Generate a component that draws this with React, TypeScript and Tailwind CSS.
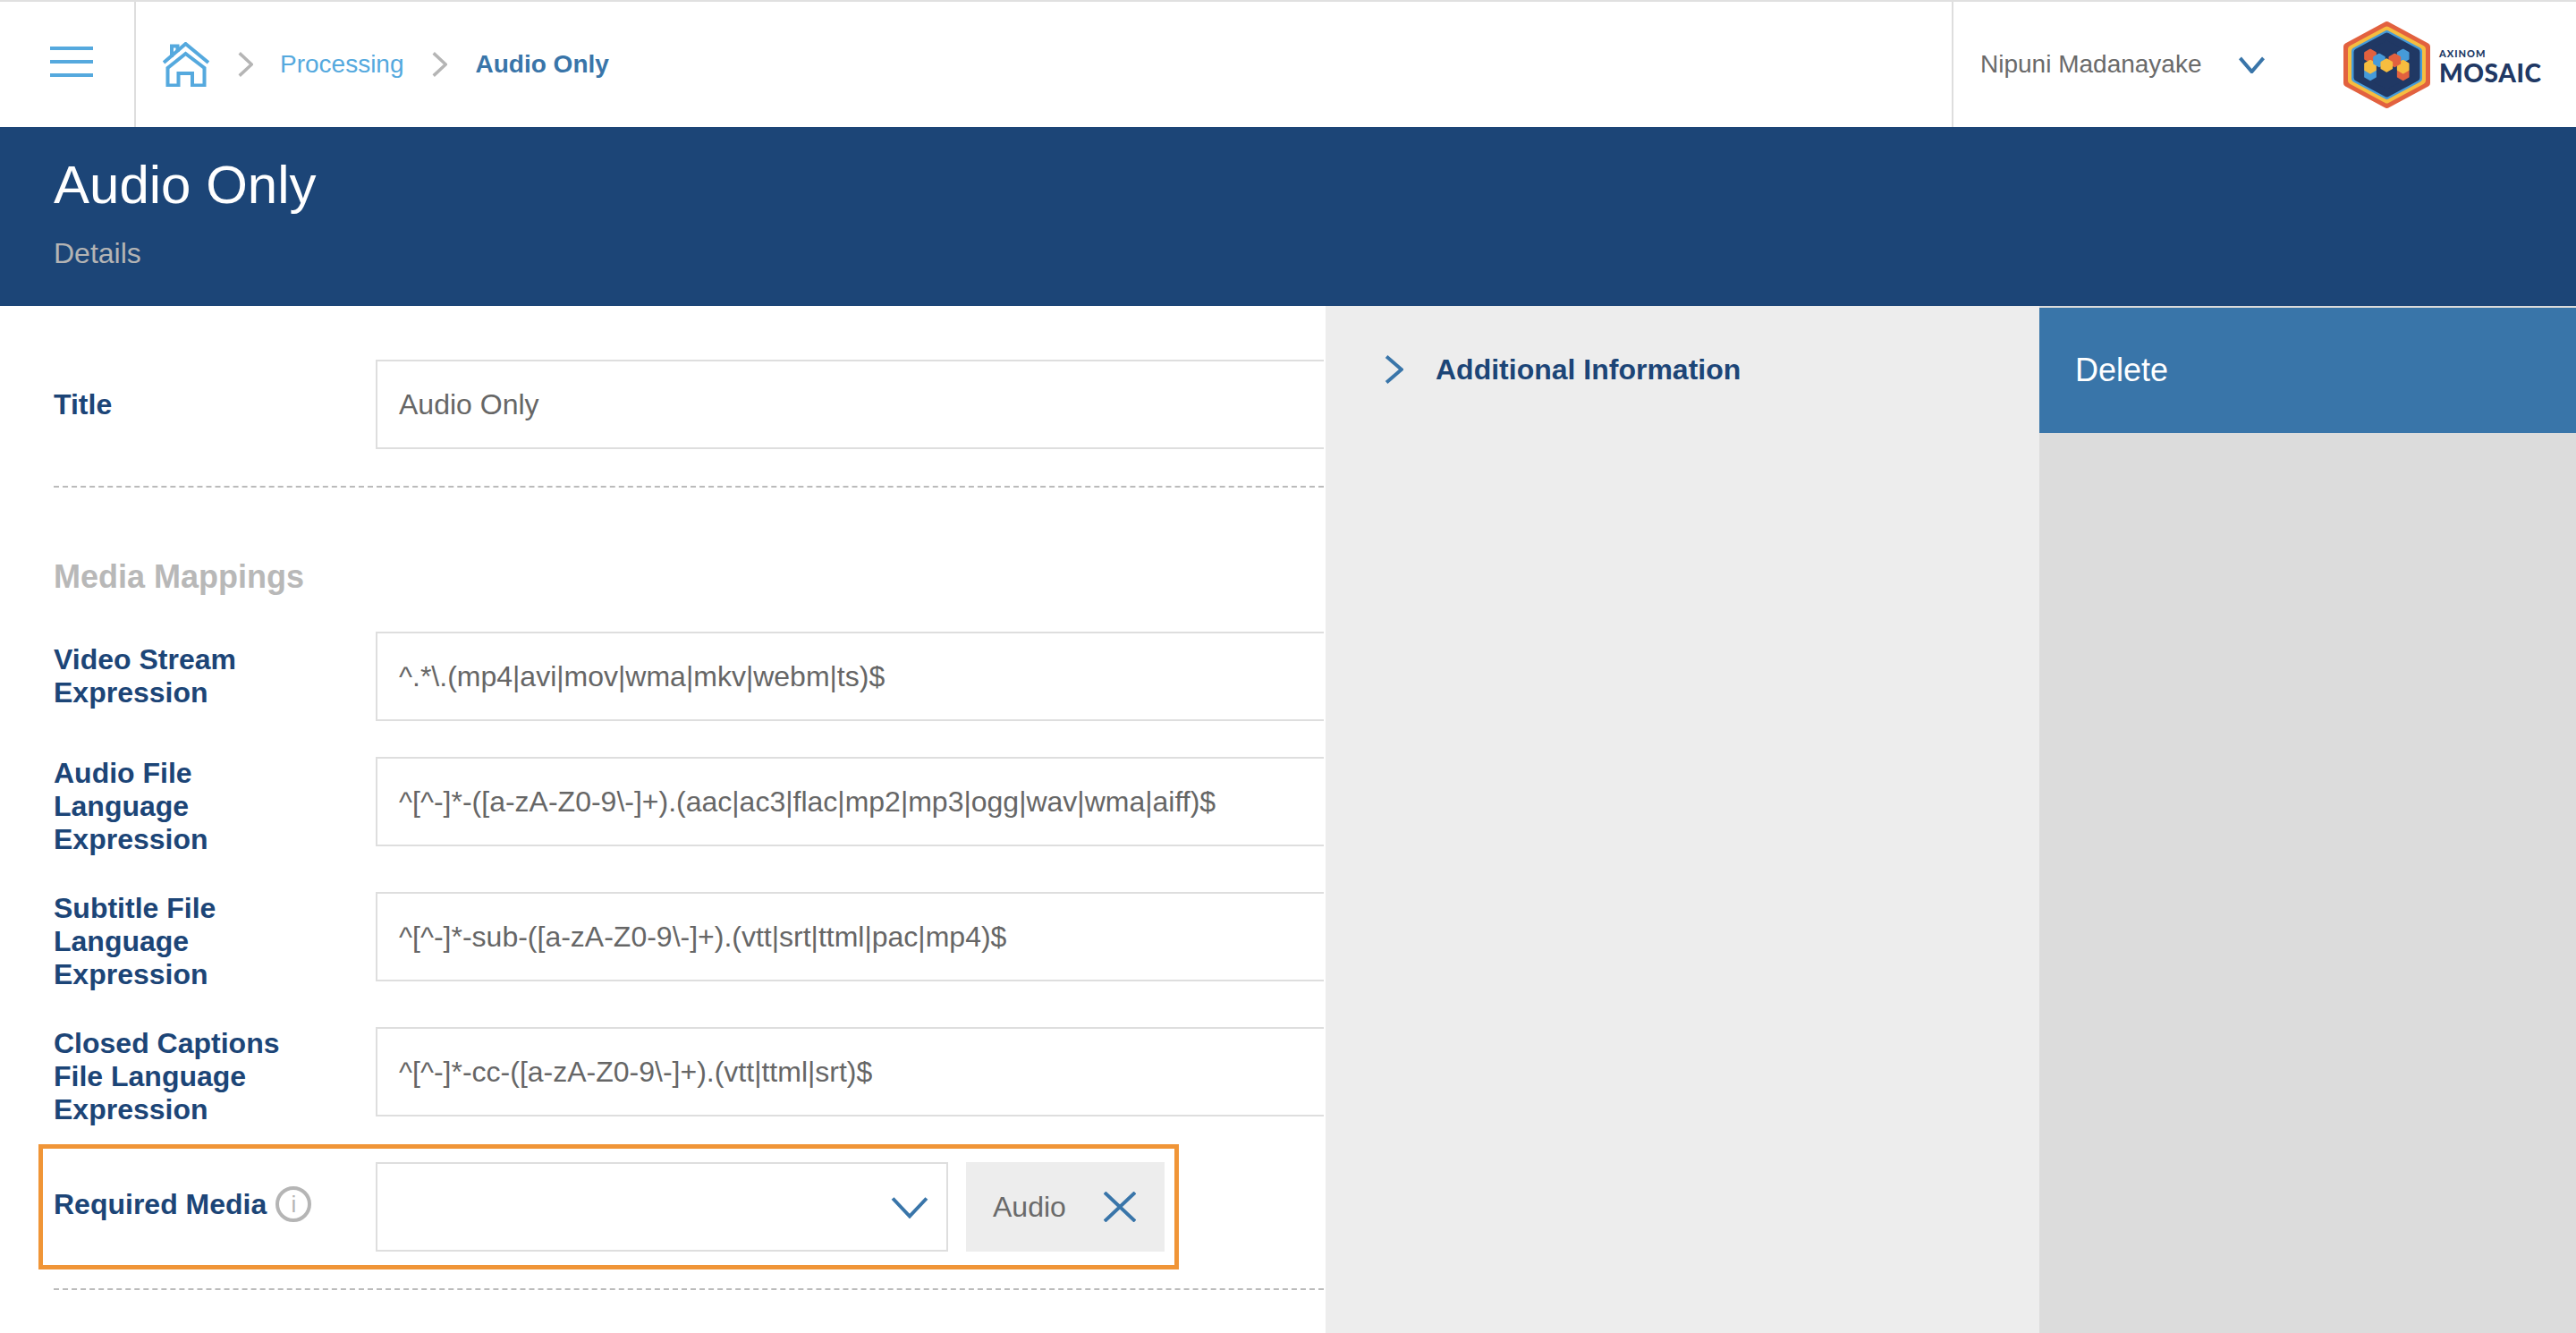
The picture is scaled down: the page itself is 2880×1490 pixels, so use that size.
const BLUE = '#3975a9';

function Chevron({ dir, color, className, width = 3.5 }: { dir: 'right' | 'down'; color: string; className: string; width?: number }) {
  return (
    <svg className={className} viewBox="0 0 20 20" preserveAspectRatio="none" fill="none">
      <path
        d={dir === 'right' ? 'M2 1 L18 10 L2 19' : 'M1 2 L10 18 L19 2'}
        stroke={color}
        strokeWidth={width}
        vectorEffect="non-scaling-stroke"
      />
    </svg>
  );
}

function HomeIcon() {
  return (
    <svg className="w-[52px] h-[50px]" viewBox="12 12 52 50" fill="none" stroke="#55a9de" strokeWidth="4">
      <path d="M13 35 L37.5 14 L63 35" />
      <path d="M22 29 V16.5 H28.5 V23" />
      <path d="M17.5 60.5 V41 L37.5 25 L58.5 41 V60.5 H45 V47 H29.5 V60.5 Z" />
    </svg>
  );
}

function hexPoints(cx: number, cy: number, r: number) {
  const dx = r * 0.86;
  return `${cx},${cy - r} ${cx + dx},${cy - r / 2} ${cx + dx},${cy + r / 2} ${cx},${cy + r} ${cx - dx},${cy + r / 2} ${cx - dx},${cy - r / 2}`;
}

function MiniHex({ x, y, fill }: { x: number; y: number; fill: string }) {
  return <polygon points={hexPoints(x, y, 6.5)} fill={fill} stroke={fill} strokeWidth="2.5" strokeLinejoin="round" />;
}

function LogoMark() {
  const ring = (inset: number) => {
    const l = 4 + inset;
    const r = 93 - inset;
    const t = 4 + inset * 1.1;
    const b = 93 - inset * 1.1;
    return `48.5,${t} ${r},${28 + inset * 0.55} ${r},${69 - inset * 0.55} 48.5,${b} ${l},${69 - inset * 0.55} ${l},${28 + inset * 0.55}`;
  };
  return (
    <svg className="w-[97px] h-[97px] shrink-0" viewBox="0 0 97 97">
      <polygon points={ring(0)} fill="#e2613f" stroke="#e2613f" strokeWidth="8" strokeLinejoin="round" />
      <polygon points={ring(5)} fill="#f6bd3f" stroke="#f6bd3f" strokeWidth="8" strokeLinejoin="round" />
      <polygon points={ring(9)} fill="#469bd9" stroke="#469bd9" strokeWidth="8" strokeLinejoin="round" />
      <polygon points={ring(11.5)} fill="#203864" stroke="#203864" strokeWidth="8" strokeLinejoin="round" />
      <MiniHex x={30} y={58.4} fill="#469bd9" />
      <MiniHex x={66.7} y={58.4} fill="#e2613f" />
      <MiniHex x={30} y={38.4} fill="#e2613f" />
      <MiniHex x={66.7} y={38.4} fill="#469bd9" />
      <MiniHex x={30} y={50.7} fill="#f6bd3f" />
      <MiniHex x={66.7} y={50.7} fill="#f6bd3f" />
      <MiniHex x={40} y={43.4} fill="#469bd9" />
      <MiniHex x={57.3} y={43.4} fill="#e2613f" />
      <MiniHex x={48.3} y={49} fill="#f6bd3f" />
    </svg>
  );
}

function Header() {
  return (
    <div className="flex h-[142px] border-t-2 border-[#e0e0e0] bg-white">
      <div className="w-[152px] border-r-2 border-[#dedede] pl-[56px] flex flex-col justify-center gap-[11px] pb-[6px]">
        <div className="w-12 h-[4px] bg-[#55a9de]" />
        <div className="w-12 h-[4px] bg-[#55a9de]" />
        <div className="w-12 h-[4px] bg-[#55a9de]" />
      </div>
      <div className="flex items-center pl-[30px] text-[28px]">
        <HomeIcon />
        <Chevron dir="right" color="#b5b5b5" className="w-[17px] h-[28px] ml-[32px]" />
        <span className="ml-[30px] text-[#55a9de]">Processing</span>
        <Chevron dir="right" color="#b5b5b5" className="w-[17px] h-[28px] ml-[31px]" />
        <span className="ml-[32px] font-bold text-[#3975a9]">Audio Only</span>
      </div>
      <div className="ml-auto w-[698px] border-l-2 border-[#dedede] flex items-center pl-[30px]">
        <span className="text-[28px] text-[#6a6a6a] w-[289px]">Nipuni Madanayake</span>
        <Chevron dir="down" color={BLUE} className="w-[29px] h-[19px]" width={4} />
        <div className="ml-[88px] flex items-center">
          <LogoMark />
          <div className="ml-[10px] text-[#203864] font-['Lato',sans-serif] font-black mt-[6px]">
            <div className="text-[11px] leading-[12px] tracking-[1px]">AXINOM</div>
            <div className="text-[28px] leading-[30px] tracking-[0.6px]">MOSAIC</div>
          </div>
        </div>
      </div>
    </div>
  );
}

function Row({ label, value, className }: { label: string; value: string; className?: string }) {
  return (
    <div className={`flex ${className ?? ''}`}>
      <div className="w-[360px] pr-[90px] self-center text-[32px] leading-[37px] font-bold text-[#1c4577]">{label}</div>
      <div className="flex-1 h-[100px] border-2 border-r-0 border-[#dedede] flex items-center pl-[24px] text-[32px] text-[#666]">
        {value}
      </div>
    </div>
  );
}

export default function App() {
  return (
    <div className="w-[2880px] h-[1490px] overflow-hidden bg-white font-['Liberation_Sans',Arial,sans-serif]">
      <Header />
      <div className="h-[200px] bg-[#1c4577] pl-[60px] pt-[35px]">
        <h1 className="text-[60px] leading-[60px] text-white">Audio Only</h1>
        <div className="mt-[28px] text-[32px] leading-[37px] text-[#b4b4b4]">Details</div>
      </div>
      <div className="flex h-[1148px]">
        <div className="w-[1482px] pl-[60px] pr-[2px] pt-[60px] overflow-hidden">
          <Row label="Title" value="Audio Only" />
          <div className="mt-[41px] border-t-2 border-dashed border-[#bbbbbb]" />
          <div className="mt-[79px] mb-[41px] text-[36px] leading-[41px] font-bold text-[#b8b8b8]">Media Mappings</div>
          <Row className="mb-10" label="Video Stream Expression" value="^.*\.(mp4|avi|mov|wma|mkv|webm|ts)$" />
          <Row className="mb-10" label="Audio File Language Expression" value="^[^-]*-([a-zA-Z0-9\-]+).(aac|ac3|flac|mp2|mp3|ogg|wav|wma|aiff)$" />
          <Row className="mb-10" label="Subtitle File Language Expression" value="^[^-]*-sub-([a-zA-Z0-9\-]+).(vtt|srt|ttml|pac|mp4)$" />
          <Row label="Closed Captions File Language Expression" value="^[^-]*-cc-([a-zA-Z0-9\-]+).(vtt|ttml|srt)$" />
          <div className="mt-[20px] -ml-[17px] w-[1275px] h-[140px] border-[5px] border-[#f09537] pl-[12px] flex items-center">
            <div className="w-[360px] pb-[6px] flex items-center text-[32px] font-bold text-[#1c4577]">
              <span>Required Media</span>
              <span className="ml-[10px] w-10 h-10 rounded-full border-4 border-[#b5b5b5] flex items-center justify-center text-[26px] font-normal text-[#b5b5b5]">
                i
              </span>
            </div>
            <div className="w-[640px] h-[100px] border-2 border-[#dedede] flex items-center justify-end pr-[20px]">
              <Chevron dir="down" color={BLUE} className="w-[42px] h-[25px]" width={4} />
            </div>
            <div className="ml-[20px] w-[222px] h-[100px] bg-[#ededed] flex items-center pl-[30px] text-[32px] text-[#6a6a6a]">
              <span className="w-[124px]">Audio</span>
              <svg className="w-9 h-[34px]" viewBox="0 0 36 34" fill="none" stroke={BLUE} strokeWidth="4">
                <path d="M1 1 L35 33 M35 1 L1 33" />
              </svg>
            </div>
          </div>
          <div className="mt-[21px] border-t-2 border-dashed border-[#bbbbbb]" />
        </div>
        <div className="w-[798px] bg-[#ededed] pt-[52px] pl-[66px]">
          <div className="flex items-center h-[37px]">
            <Chevron dir="right" color={BLUE} className="w-[21px] h-[32px]" width={4} />
            <span className="ml-[36px] text-[32px] font-bold text-[#1c4577]">Additional Information</span>
          </div>
        </div>
        <div className="w-[600px] bg-[#dcdcdc] pt-[2px]">
          <div className="h-[140px] bg-[#3975a9] flex items-center pl-[40px] text-[36px] text-white">Delete</div>
        </div>
      </div>
    </div>
  );
}
